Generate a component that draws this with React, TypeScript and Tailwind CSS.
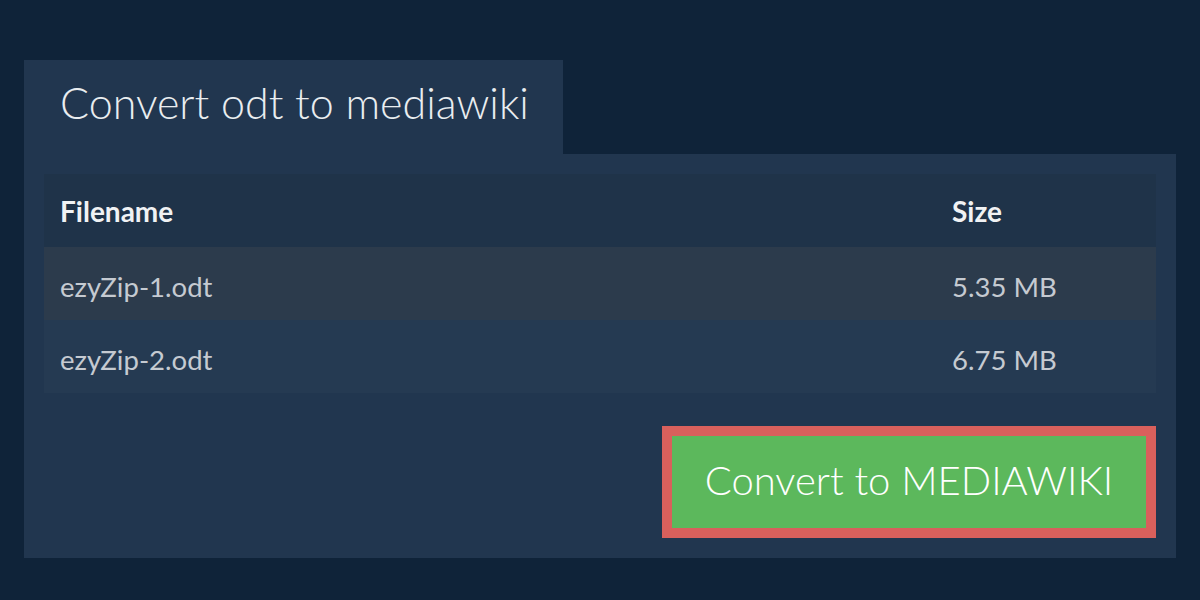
const files = [
  { name: 'ezyZip-1.odt', size: '5.35 MB' },
  { name: 'ezyZip-2.odt', size: '6.75 MB' }
];

const rowColors = ['bg-[#2c3b4c]', 'bg-[#253a52]'];

const App = () => {
  return (
    <div className="h-[600px] w-[1200px] bg-[#0f2339] px-6 pt-[60px] font-['Lato',sans-serif]">
      <div className="flex">
        <div className="flex h-[94px] w-[539px] items-center bg-[#21364f] pb-2 pl-9">
          <h1 className="text-[43px] font-light text-[#e9edf0]">Convert odt to mediawiki</h1>
        </div>
      </div>
      <div className="flex flex-col bg-[#21364f] p-5">
        <table className="w-full border-collapse text-left">
          <thead>
            <tr className="h-[73px] bg-[#1f3349]">
              <th className="pl-4 text-[28px] font-bold text-[#f0f2f4]">Filename</th>
              <th className="w-[204px] text-[28px] font-bold text-[#f0f2f4]">Size</th>
            </tr>
          </thead>
          <tbody>
            {files.map((file, i) => (
              <tr key={file.name} className={`h-[73px] ${rowColors[i]}`}>
                <td className="pl-4 pt-1.5 text-[27.5px] text-[#c5cad1]">{file.name}</td>
                <td className="pt-1.5 text-[27.5px] text-[#c5cad1]">{file.size}</td>
              </tr>
            ))}
          </tbody>
        </table>
        <div className="mt-[33px] flex justify-end">
          <button className="flex h-[112px] w-[494px] items-center justify-center border-[10px] border-[#d9605c] bg-[#5cb85c] pb-1 text-[40px] font-light text-white">
            Convert to MEDIAWIKI
          </button>
        </div>
      </div>
    </div>
  );
};

export default App;
